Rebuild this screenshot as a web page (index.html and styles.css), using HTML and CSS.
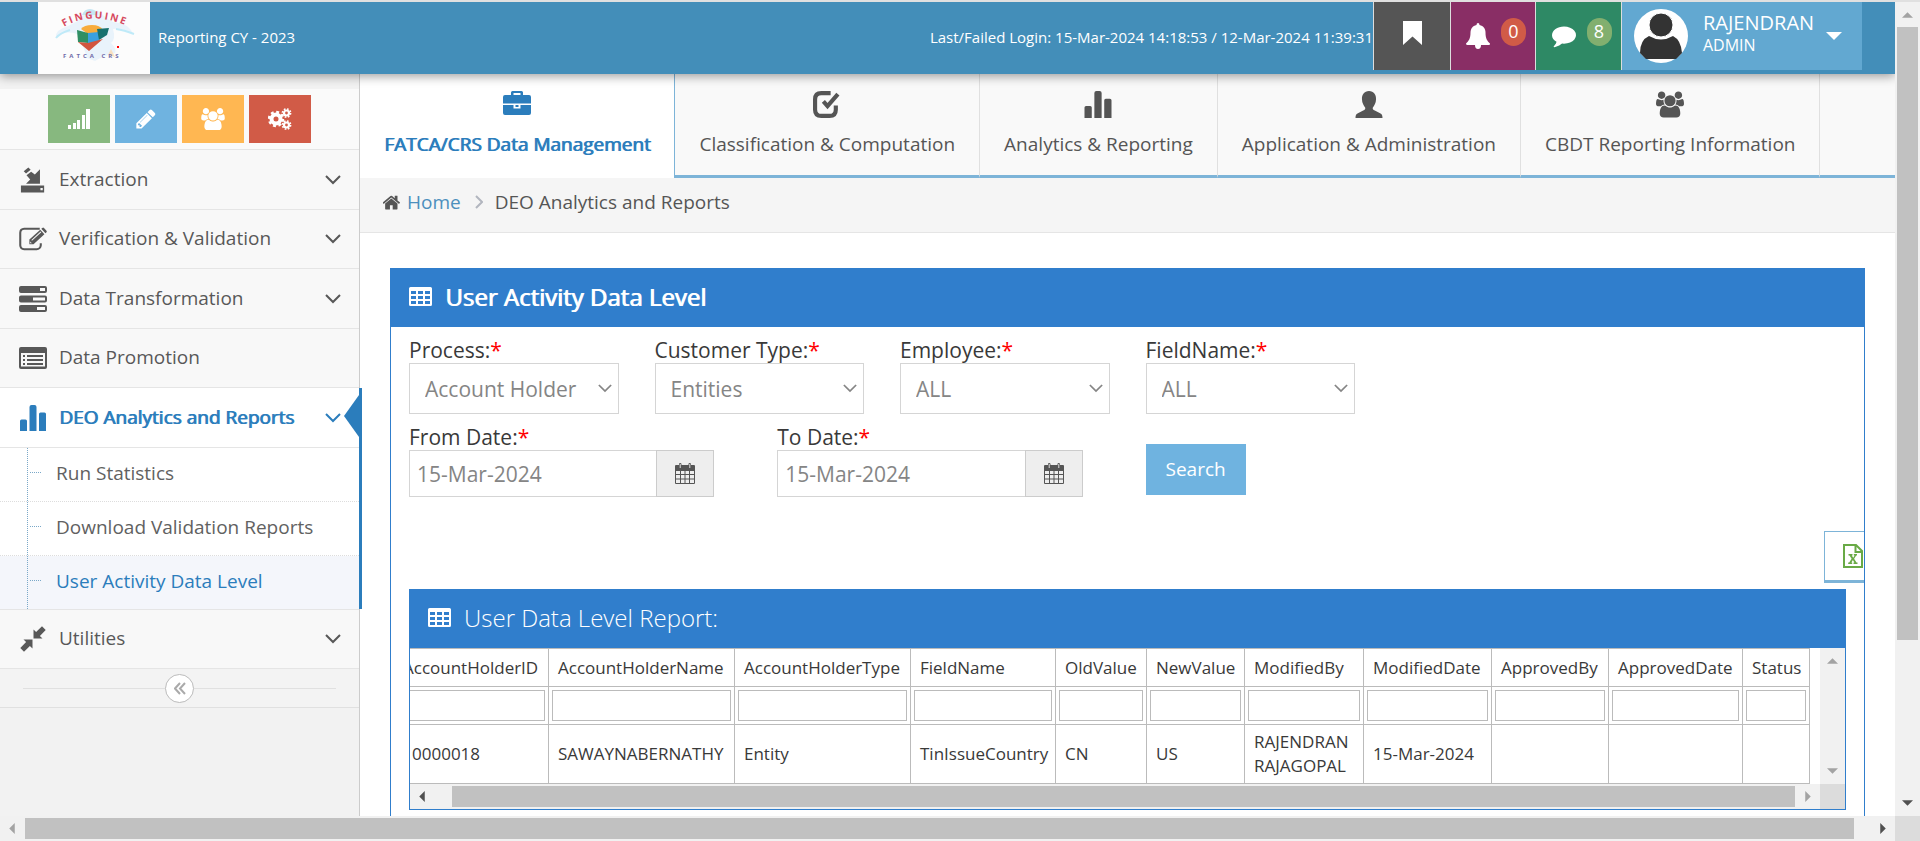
FILE: index.html
```html
<!DOCTYPE html>
<html lang="en">
<head>
  <meta charset="UTF-8">
  <meta name="viewport" content="width=device-width, initial-scale=1.0">
  <title>FATCA/CRS - User Activity Data Level</title>
  <link rel="stylesheet" href="styles.css">
</head>
<body>

  <!-- Icon set -->
  <svg class="icon-defs" aria-hidden="true">
    <symbol id="i-signal" viewBox="0 0 22 20"><path d="M0 16h3v4H0zM5 14h3v6H5zM9 11h3v9H9zM14 6h3v14h-3zM18 0h4v20h-4z"/></symbol>
    <symbol id="i-pencil" viewBox="100 100 1600 1600"><path d="M491 1536l91-91-235-235-91 91v107h128v128h107zm523-928q0-22-22-22-10 0-17 7l-542 542q-7 7-7 17 0 22 22 22 10 0 17-7l542-542q7-7 7-17zm-54-192l416 416-832 832h-416v-416zm683 96q0 53-37 90l-166 166-416-416 166-165q36-38 90-38 53 0 91 38l235 234q37 39 37 91z"/></symbol>
    <symbol id="i-users" viewBox="0 0 1920 1792"><path d="M593 896q-162 5-265 128h-134q-82 0-138-40.500t-56-118.500q0-353 124-353 6 0 43.500 21t97.500 42.500 119 21.500q67 0 133-23-5 37-5 66 0 139 81 256zm1071 637q0 120-73 189.500t-194 69.500h-874q-121 0-194-69.500t-73-189.500q0-53 3.500-103.500t14-109 26.500-108.500 43-97.500 62-81 85.500-53.500 111.500-20q10 0 43 21.500t73 48 107 48 135 21.500 135-21.500 107-48 73-48 43-21.500q61 0 111.500 20t85.500 53.500 62 81 43 97.500 26.500 108.500 14 109 3.500 103.500zm-1024-1277q0 106-75 181t-181 75-181-75-75-181 75-181 181-75 181 75 75 181zm704 384q0 159-112.500 271.500t-271.500 112.500-271.500-112.500-112.500-271.500 112.500-271.500 271.500-112.500 271.500 112.500 112.500 271.500zm576 225q0 78-56 118.500t-138 40.500h-134q-103-123-265-128 81-117 81-256 0-29-5-66 66 23 133 23 59 0 119-21.500t97.500-42.500 43.500-21q124 0 124 353zm-128-609q0 106-75 181t-181 75-181-75-75-181 75-181 181-75 181 75 75 181z"/></symbol>
    <symbol id="i-cogs" viewBox="0 0 24 22">
      <g fill="none" stroke="currentColor">
        <circle cx="8" cy="11" r="4.500" stroke-width="4"/>
        <circle cx="8" cy="11" r="7" stroke-width="2.400" stroke-dasharray="2.900 2.600"/>
        <circle cx="18.500" cy="5" r="2.500" stroke-width="2.200"/>
        <circle cx="18.500" cy="5" r="4.100" stroke-width="1.600" stroke-dasharray="1.700 1.520"/>
        <circle cx="18.500" cy="17" r="2.500" stroke-width="2.200"/>
        <circle cx="18.500" cy="17" r="4.100" stroke-width="1.600" stroke-dasharray="1.700 1.520"/>
      </g>
    </symbol>
    <symbol id="i-extract" viewBox="0 0 26 28"><path d="M3 4.500L8 0.500 10.500 3l-5 4zM20.500 2.500V18H5.500l4.500-4.500-4-4.500L11 5l4 3z"/><path fill-rule="evenodd" d="M0 20h25v7.500H0zm21 2.500v2.500h2.500v-2.500z"/></symbol>
    <symbol id="i-edit" viewBox="0 0 27 22"><path d="M20 1.200H5A4 4 0 0 0 1.200 5v12A4 4 0 0 0 5 20.800h12A4 4 0 0 0 21 17v-2" fill="none" stroke="currentColor" stroke-width="2"/><path fill-rule="evenodd" d="M10 11.500L20.500 2l4 4.500L14 16h-4zm2.500 1.200l9-8.200-.7-.7-8.800 8.100zM10.800 13.500v1.700h1.600zM21.500 1.200l1-.9q.8-.6 1.600.1l2.400 2.700q.6.800 0 1.500l-1 .9z"/></symbol>
    <symbol id="i-tasks" viewBox="0 0 28 26"><path fill-rule="evenodd" d="M2 0h24q2 0 2 2v3q0 2-2 2H2Q0 7 0 5V2q0-2 2-2zm19 2v3h5V2zM2 9.500h24q2 0 2 2v3q0 2-2 2H2q-2 0-2-2v-3q0-2 2-2zm12 2v3h12v-3zM2 19h24q2 0 2 2v3q0 2-2 2H2q-2 0-2-2v-3q0-2 2-2zm16 2v3h8v-3z"/></symbol>
    <symbol id="i-listalt" viewBox="0 0 28 22"><path fill-rule="evenodd" d="M2 0h24q2 0 2 2v18q0 2-2 2H2q-2 0-2-2V2q0-2 2-2zm0 6v13.500h24V6z"/><path d="M4 8h2v2H4zm4 0h16v2H8zM4 12h2v2H4zm4 0h16v2H8zM4 16h2v2H4zm4 0h16v2H8z"/></symbol>
    <symbol id="i-bars" viewBox="0 0 26 26"><path d="M0 26V16q0-1.500 1.500-1.500h4q1.500 0 1.500 1.500v10zM9.500 26V2q0-2 2-2h3q2 0 2 2v24zM19 26V9q0-1.500 1.500-1.500h4Q26 7.500 26 9v17z"/></symbol>
    <symbol id="i-compress" viewBox="0 0 26 26"><path d="M13.500 3.500l2.600 2.600L22 0.300 25.700 4l-5.800 5.900 2.600 2.600h-9zM3.500 13.500h9v9l-2.600-2.600L4 25.700.3 22l5.800-5.900z"/></symbol>
    <symbol id="i-down" viewBox="0 0 16 10"><path d="M1 1l7 7 7-7" fill="none" stroke="currentColor" stroke-width="2"/></symbol>
    <symbol id="i-briefcase" viewBox="0 0 28 27"><path fill-rule="evenodd" d="M8 4V1.500Q8 0 9.500 0h9Q20 0 20 1.500V4h6q2 0 2 2v6.500H0V6q0-2 2-2zm2.500 0h7V2h-7zM0 14h10.500v3.500h7V14H28v8q0 2-2 2H2q-2 0-2-2zm12.500 0h3v2h-3z"/></symbol>
    <symbol id="i-check" viewBox="0 0 27 26"><path d="M17 2H8Q2 2 2 8v10q0 6 6 6h8q6 0 6-6v-4" fill="none" stroke="currentColor" stroke-width="4"/><path d="M10 10l4 4.500L24 3" fill="none" stroke="currentColor" stroke-width="4"/></symbol>
    <symbol id="i-user" viewBox="0 0 28 28"><path d="M14 0c5 0 7.500 4 7.300 8.500-.1 4-1.800 6.500-3.300 8.500-.5 1.500.2 2.500 2 3.200l5.500 2.800c2 1 2.500 2.500 2.500 5H0c0-2.500.5-4 2.500-5L8 20.200c1.800-.7 2.500-1.700 2-3.200-1.500-2-3.200-4.500-3.300-8.500C6.500 4 9 0 14 0z"/></symbol>
    <symbol id="i-home" viewBox="60 190 1672 1400"><path d="M1408 992v480q0 26-19 45t-45 19h-384v-384h-256v384h-384q-26 0-45-19t-19-45v-480q0-1 .5-3t.5-3l575-474 575 474q1 2 1 6zm223-69l-62 74q-8 9-21 11h-3q-13 0-21-7l-692-577-692 577q-12 8-24 7-13-2-21-11l-62-74q-8-10-7-23.500t11-21.500l719-599q32-26 76-26t76 26l244 204v-195q0-14 9-23t23-9h192q14 0 23 9t9 23v408l219 182q10 8 11 21.500t-7 23.500z"/></symbol>
    <symbol id="i-right" viewBox="0 0 8 14"><path d="M1 1l6 6-6 6" fill="none" stroke="currentColor" stroke-width="2"/></symbol>
    <symbol id="i-table" viewBox="0 0 23 19"><path fill-rule="evenodd" d="M1.500 0h20Q23 0 23 1.500v16q0 1.500-1.500 1.500h-20Q0 19 0 17.500v-16Q0 0 1.500 0zM2 4v3h5V4zm7 0v3h5V4zm7 0v3h5V4zM2 9v3h5V9zm7 0v3h5V9zm7 0v3h5V9zM2 14v3h5v-3zm7 0v3h5v-3zm7 0v3h5v-3z"/></symbol>
    <symbol id="i-calendar" viewBox="0 0 20 21"><path fill-rule="evenodd" d="M1 2h3V1q0-1 1.200-1T6.500 1v1h7V1q0-1 1.200-1T16 1v1h3q1 0 1 1v17q0 1-1 1H1q-1 0-1-1V3q0-1 1-1zm0 6v3h4V8zm5 0v3h3.500V8zm4.500 0v3H14V8zM15 8v3h4V8zM1 12v3.500h4V12zm5 0v3.500h3.500V12zm4.500 0v3.500H14V12zm4.500 0v3.500h4V12zM1 16.500V20h4v-3.500zm5 0V20h3.500v-3.500zm4.500 0V20H14v-3.500zm4.500 0V20h4v-3.500z"/><path d="M4.700 1h1v4h-1zM14.300 1h1v4h-1z" fill="#ddd"/></symbol>
    <symbol id="i-bookmark" viewBox="0 0 19 24"><path d="M0 0h19v24l-9.500-8.500L0 24z"/></symbol>
    <symbol id="i-bell" viewBox="0 0 24 26"><path d="M12 0q1.500 0 1.500 2c4 .8 6 4 6 7.500 0 5.500 1.500 8.500 4.500 11 0 1-.5 1.500-1.500 1.500H15q0 4-3 4t-3-4H1.500Q0 22 0 20.500c3-2.500 4.500-5.500 4.500-11 0-3.500 2-6.700 6-7.500Q10.500 0 12 0z"/></symbol>
    <symbol id="i-comment" viewBox="0 128 1792 1664"><path d="M1792 896q0 174-120 321.500t-326 233-450 85.500q-70 0-145-8-198 175-460 242-49 14-114 22-17 2-30.500-9t-17.500-29v-1q-3-4-.5-12t2-10 4.500-9.500l6-9 7-8.500 8-9q7-8 31-34.500t34.500-38 31-39.500 32.500-51 27-59 26-76q-157-89-247.500-220t-90.500-281q0-130 71-248.500t191-204.500 286-136.500 348-50.500q244 0 450 85.500t326 233 120 321.500z"/></symbol>
    <symbol id="i-excel" viewBox="0 0 20 24"><path d="M1 1h12l6 6v16H1zM12.500 1v7H19" fill="none" stroke="currentColor" stroke-width="2"/><path d="M5.500 10h4v1.500h-.7l1.400 2.300 1.400-2.300h-.8V10H14v1.500h-.8l-2.100 3.300 2.400 3.700h1V20h-4v-1.500h.8L9.900 16l-1.500 2.500h.8V20h-4v-1.500h1l2.400-3.700-2.100-3.300h-1z"/></symbol>
    <symbol id="i-dleft" viewBox="0 0 12 13"><path d="M6 1L1 6.500 6 12M11 1L6 6.500l5 5.500" fill="none" stroke="currentColor" stroke-width="2"/></symbol>
    <symbol id="i-tri-up" viewBox="0 0 12 6"><path d="M6 0l6 6H0z"/></symbol>
    <symbol id="i-tri-down" viewBox="0 0 12 6"><path d="M0 0h12L6 6z"/></symbol>
    <symbol id="i-tri-left" viewBox="0 0 6 12"><path d="M6 0v12L0 6z"/></symbol>
    <symbol id="i-tri-right" viewBox="0 0 6 12"><path d="M0 0l6 6-6 6z"/></symbol>
  </svg>

  <div class="viewport">
    <div class="page">

      <!-- Top bar -->
      <header class="navbar">
        <a class="brand" href="#" aria-label="Finguine FATCA CRS">
          <svg class="brand-logo" viewBox="0 0 112 72">
            <path d="M18 35q-1-7 12-11 12-5 16-12 5-6 15-3 6 7 14 11 16 1 20 12-10-6-20-5 3 10-2 14 6 6 4 10-12 3-20 8l-8-3q-4-14-10-24-12-4-21 3z" fill="#e9f3fb"/>
            <path d="M18 36q4-5 14-8M96 32q-10-4-18-5" fill="none" stroke="#bfeaf8" stroke-width="2"/>
            <path d="M44 13q2-6 8-6t7 6z" fill="#c5e6f3"/>
            <path d="M43 27q3-4 11-4t11 5l-11 7z" fill="#f7ac3c"/>
            <path d="M39 28l11 3v10l-10-1z" fill="#2f8f63"/>
            <path d="M50 31l11-1v9l-11 3z" fill="#3ba0e0"/>
            <path d="M59 27l12-1-2 7-8 5z" fill="#17716f"/>
            <path d="M40 40l10 1 11-3 4-1-14 12z" fill="#d1553f"/>
            <path d="M70 53l3-6 4 8z" fill="#f9dfc0"/>
            <rect x="79" y="44" width="2" height="2" fill="#f00"/>
            <path id="arc" d="M26 25Q54 8 92 25" fill="none"/>
            <text class="logo-name"><textPath href="#arc">FINGUINE</textPath></text>
            <text class="logo-sub" x="25" y="56">FATCA CRS</text>
          </svg>
        </a>
        <span class="navbar-text">Reporting CY - 2023</span>
        <span class="navbar-text login-info">Last/Failed Login: 15-Mar-2024 14:18:53 / 12-Mar-2024 11:39:31</span>
        <button class="nav-btn nav-grey" aria-label="Bookmark"><svg class="ico-bookmark"><use href="#i-bookmark"/></svg></button>
        <button class="nav-btn nav-purple" aria-label="Notifications"><svg class="ico-bell"><use href="#i-bell"/></svg><span class="badge badge-red">0</span></button>
        <button class="nav-btn nav-green" aria-label="Messages"><svg class="ico-bell"><use href="#i-comment"/></svg><span class="badge badge-green">8</span></button>
        <button class="nav-btn nav-user">
          <svg class="avatar" viewBox="0 0 54 54">
            <circle cx="27" cy="27" r="27" fill="#fff"/>
            <path d="M6 44q0-13 9-17 12 7 24 0 8 4 9 17l-6 6H12z" fill="#333"/>
            <ellipse cx="27" cy="16" rx="12" ry="12" fill="#333" stroke="#fff"/>
          </svg>
          <span class="user-info">RAJENDRAN<small>ADMIN</small></span>
          <svg class="caret"><use href="#i-tri-down"/></svg>
        </button>
      </header>

      <div class="main-container">

        <!-- Sidebar -->
        <aside class="sidebar">
          <div class="shortcuts">
            <button class="btn-success" aria-label="Statistics"><svg><use href="#i-signal"/></svg></button>
            <button class="btn-info" aria-label="Edit"><svg><use href="#i-pencil"/></svg></button>
            <button class="btn-warning" aria-label="Users"><svg class="wide"><use href="#i-users"/></svg></button>
            <button class="btn-danger" aria-label="Settings"><svg class="wide"><use href="#i-cogs"/></svg></button>
          </div>
          <ul class="nav-list">
            <li><a href="#"><svg><use href="#i-extract"/></svg><span>Extraction</span><svg class="arrow"><use href="#i-down"/></svg></a></li>
            <li><a href="#"><svg><use href="#i-edit"/></svg><span>Verification &amp; Validation</span><svg class="arrow"><use href="#i-down"/></svg></a></li>
            <li><a href="#"><svg><use href="#i-tasks"/></svg><span>Data Transformation</span><svg class="arrow"><use href="#i-down"/></svg></a></li>
            <li><a href="#"><svg><use href="#i-listalt"/></svg><span>Data Promotion</span></a></li>
            <li class="active">
              <a href="#"><svg><use href="#i-bars"/></svg><span>DEO Analytics and Reports</span><svg class="arrow"><use href="#i-down"/></svg></a>
              <ul class="submenu">
                <li><a href="#">Run Statistics</a></li>
                <li><a href="#">Download Validation Reports</a></li>
                <li class="current"><a href="#">User Activity Data Level</a></li>
              </ul>
            </li>
            <li><a href="#"><svg><use href="#i-compress"/></svg><span>Utilities</span><svg class="arrow"><use href="#i-down"/></svg></a></li>
          </ul>
          <div class="sidebar-collapse">
            <button aria-label="Collapse sidebar"><svg><use href="#i-dleft"/></svg></button>
          </div>
        </aside>

        <main class="main-content">
          <nav class="tabs">
            <a class="tab active" href="#"><svg><use href="#i-briefcase"/></svg>FATCA/CRS Data Management</a>
            <a class="tab" href="#"><svg><use href="#i-check"/></svg>Classification &amp; Computation</a>
            <a class="tab" href="#"><svg><use href="#i-bars"/></svg>Analytics &amp; Reporting</a>
            <a class="tab" href="#"><svg><use href="#i-user"/></svg>Application &amp; Administration</a>
            <a class="tab" href="#"><svg><use href="#i-users"/></svg>CBDT Reporting Information</a>
            <span class="tab-rest"></span>
          </nav>

          <div class="breadcrumbs">
            <svg class="ico-home"><use href="#i-home"/></svg>
            <a href="#">Home</a>
            <svg class="ico-sep"><use href="#i-right"/></svg>
            <span>DEO Analytics and Reports</span>
          </div>

          <section class="widget">
            <h4 class="widget-header bold"><svg><use href="#i-table"/></svg>User Activity Data Level</h4>
            <form class="filters">
              <div class="field">
                <label for="process">Process:<i>*</i></label>
                <div class="select-wrap"><select id="process"><option>Account Holder</option></select><svg><use href="#i-down"/></svg></div>
              </div>
              <div class="field">
                <label for="customerType">Customer Type:<i>*</i></label>
                <div class="select-wrap"><select id="customerType"><option>Entities</option></select><svg><use href="#i-down"/></svg></div>
              </div>
              <div class="field">
                <label for="employee">Employee:<i>*</i></label>
                <div class="select-wrap"><select id="employee"><option>ALL</option></select><svg><use href="#i-down"/></svg></div>
              </div>
              <div class="field">
                <label for="fieldName">FieldName:<i>*</i></label>
                <div class="select-wrap"><select id="fieldName"><option>ALL</option></select><svg><use href="#i-down"/></svg></div>
              </div>
              <div class="field field-date first">
                <label for="fromDate">From Date:<i>*</i></label>
                <div class="input-group"><input type="text" id="fromDate" value="15-Mar-2024"><button type="button" aria-label="Pick from date"><svg><use href="#i-calendar"/></svg></button></div>
              </div>
              <div class="field field-date">
                <label for="toDate">To Date:<i>*</i></label>
                <div class="input-group"><input type="text" id="toDate" value="15-Mar-2024"><button type="button" aria-label="Pick to date"><svg><use href="#i-calendar"/></svg></button></div>
              </div>
              <div class="field field-search">
                <button type="button" class="btn-search">Search</button>
              </div>
            </form>

            <div class="export-bar"><button class="btn-export" aria-label="Export to Excel"><svg><use href="#i-excel"/></svg></button></div>

            <div class="report">
              <h4 class="widget-header"><svg><use href="#i-table"/></svg>User Data Level Report:</h4>
              <div class="report-body">
                <div class="report-view">
                  <table class="report-table">
                    <colgroup>
                      <col class="c-id"><col class="c-name"><col class="c-type"><col class="c-field"><col class="c-old"><col class="c-new"><col class="c-modby"><col class="c-moddate"><col class="c-appby"><col class="c-appdate"><col class="c-status">
                    </colgroup>
                    <thead>
                      <tr>
                        <th>AccountHolderID</th><th>AccountHolderName</th><th>AccountHolderType</th><th>FieldName</th><th>OldValue</th><th>NewValue</th><th>ModifiedBy</th><th>ModifiedDate</th><th>ApprovedBy</th><th>ApprovedDate</th><th>Status</th>
                      </tr>
                      <tr class="filter-row">
                        <td><input type="text" aria-label="Filter AccountHolderID"></td>
                        <td><input type="text" aria-label="Filter AccountHolderName"></td>
                        <td><input type="text" aria-label="Filter AccountHolderType"></td>
                        <td><input type="text" aria-label="Filter FieldName"></td>
                        <td><input type="text" aria-label="Filter OldValue"></td>
                        <td><input type="text" aria-label="Filter NewValue"></td>
                        <td><input type="text" aria-label="Filter ModifiedBy"></td>
                        <td><input type="text" aria-label="Filter ModifiedDate"></td>
                        <td><input type="text" aria-label="Filter ApprovedBy"></td>
                        <td><input type="text" aria-label="Filter ApprovedDate"></td>
                        <td><input type="text" aria-label="Filter Status"></td>
                      </tr>
                    </thead>
                    <tbody>
                      <tr>
                        <td class="id-cell">0000018</td><td>SAWAYNABERNATHY</td><td>Entity</td><td>TinIssueCountry</td><td>CN</td><td>US</td><td>RAJENDRAN RAJAGOPAL</td><td>15-Mar-2024</td><td></td><td></td><td></td>
                      </tr>
                    </tbody>
                  </table>
                </div>
                <div class="scroll-y">
                  <svg class="tri-v"><use href="#i-tri-up"/></svg>
                  <svg class="tri-v"><use href="#i-tri-down"/></svg>
                </div>
                <div class="scroll-x">
                  <svg class="tri-h dark"><use href="#i-tri-left"/></svg>
                  <div class="thumb thumb-inner"></div>
                  <svg class="tri-h"><use href="#i-tri-right"/></svg>
                </div>
                <div class="scroll-corner"></div>
              </div>
            </div>
          </section>
        </main>
      </div>
    </div>

    <!-- Page scrollbars -->
    <div class="scroll-y page-scroll-y">
      <svg class="tri-v"><use href="#i-tri-up"/></svg>
      <div class="thumb"></div>
      <svg class="tri-v dark"><use href="#i-tri-down"/></svg>
    </div>
    <div class="scroll-x">
      <svg class="tri-h"><use href="#i-tri-left"/></svg>
      <div class="thumb"></div>
      <svg class="tri-h dark"><use href="#i-tri-right"/></svg>
    </div>
    <div class="scroll-corner"></div>
  </div>

</body>
</html>
```
FILE: styles.css
```css
* {
  box-sizing: border-box;
}

body, html {
  margin: 0;
  padding: 0;
  height: 100%;
}

body {
  font-family: "Open Sans", "Noto Sans", sans-serif;
  font-size: 19px;
  color: #393939;
  background-color: #fff;
  overflow: hidden;
}

a {
  text-decoration: none;
  color: inherit;
}

ul {
  list-style: none;
  margin: 0;
  padding: 0;
}

button, input, select {
  font: inherit;
  margin: 0;
}

button {
  border: none;
  padding: 0;
  color: inherit;
  cursor: pointer;
}

svg {
  fill: currentColor;
  flex-shrink: 0;
}

.icon-defs {
  display: none;
}

.viewport {
  display: grid;
  grid-template-columns: minmax(0, 1fr) 25px;
  grid-template-rows: minmax(0, 1fr) 25px;
  height: 100vh;
  border-top: 2px solid #e0e0e0;
}

.page {
  display: flex;
  flex-direction: column;
  overflow: hidden;
}

/* Top bar */
.navbar {
  display: flex;
  align-items: flex-start;
  height: 72px;
  flex-shrink: 0;
  padding: 0 33px 0 38px;
  background-color: #438eb9;
  color: #fff;
  box-shadow: 0 2px 10px rgba(0, 0, 0, 0.4);
  position: relative;
  z-index: 2;
}

.brand {
  width: 112px;
  height: 72px;
  background-color: #fcfcfc;
}

.brand-logo {
  display: block;
  width: 112px;
  height: 72px;
}

.logo-name {
  font-size: 10px;
  font-weight: 700;
  letter-spacing: 2px;
  fill: #d64a60;
}

.logo-sub {
  font-size: 6px;
  font-weight: 700;
  letter-spacing: 3px;
  fill: #6f6aa8;
}

.navbar-text {
  font-size: 15px;
  line-height: 70px;
  margin-left: 8px;
}

.login-info {
  margin-left: auto;
}

.nav-btn {
  display: flex;
  align-items: center;
  justify-content: center;
  height: 68px;
  border-left: 1px solid #ddd;
  color: #fff;
}

.nav-grey {
  width: 77px;
  background-color: #555;
}

.nav-purple {
  width: 85px;
  padding-left: 6px;
  background-color: #892e65;
}

.nav-green {
  width: 86px;
  padding-left: 6px;
  background-color: #2e8965;
}

.nav-user {
  width: 241px;
  padding-left: 12px;
  justify-content: flex-start;
  background-color: #62a8d1;
}

.ico-bookmark {
  width: 19px;
  height: 24px;
  margin-bottom: 6px;
}

.ico-bell {
  width: 24px;
  height: 26px;
}

.badge {
  width: 25px;
  height: 28px;
  margin: 0 0 8px 11px;
  border-radius: 13px;
  font-size: 18px;
  line-height: 26px;
}

.badge-red {
  background-color: #d15b47;
}

.badge-green {
  background-color: #82af6f;
}

.avatar {
  width: 54px;
  height: 54px;
}

.user-info {
  display: flex;
  flex-direction: column;
  margin: 0 12px 4px 15px;
  font-size: 20px;
  line-height: 23px;
  text-align: left;
}

.user-info small {
  font-size: 16px;
}

.caret {
  width: 16px;
  height: 8px;
}

.main-container {
  display: flex;
  flex: 1;
  min-height: 0;
}

/* Sidebar */
.sidebar {
  width: 360px;
  flex-shrink: 0;
  padding-top: 15px;
  background-color: #f2f2f2;
  border-right: 1px solid #ccc;
}

.shortcuts {
  display: flex;
  justify-content: center;
  gap: 5px;
  padding: 6px 0;
  background-color: #fafafa;
}

.shortcuts button {
  display: flex;
  align-items: center;
  justify-content: center;
  width: 62px;
  height: 48px;
  color: #fff;
}

.shortcuts svg {
  width: 22px;
  height: 20px;
}

.shortcuts .wide {
  width: 24px;
  height: 22px;
}

.btn-success {
  background-color: #87b87f;
}

.btn-info {
  background-color: #6fb3e0;
}

.btn-warning {
  background-color: #ffb752;
}

.btn-danger {
  background-color: #d15b47;
}

.nav-list > li {
  border-top: 1px solid #e5e5e5;
}

.nav-list > li:last-child {
  border-bottom: 1px solid #e5e5e5;
}

.nav-list > li > a {
  display: flex;
  align-items: center;
  gap: 12px;
  height: 59px;
  padding: 0 18px 0 19px;
  background-color: #f8f8f8;
  color: #585858;
}

.nav-list > li:nth-child(even) > a {
  height: 58px;
}

.nav-list > li > a span {
  padding-bottom: 2px;
}

.nav-list > li > a svg {
  width: 28px;
  height: 26px;
}

.nav-list > li > a .arrow {
  width: 16px;
  height: 10px;
  margin-left: auto;
}

.nav-list > .active {
  position: relative;
}

.nav-list > .active > a {
  background-color: #fff;
  color: #2b7dbc;
  text-shadow: 1px 0 0 #2b7dbc;
}

.nav-list > .active::before {
  content: "";
  position: absolute;
  top: 0;
  bottom: 0;
  right: -3px;
  width: 3px;
  background-color: #2b7dbc;
}

.nav-list > .active::after {
  content: "";
  position: absolute;
  top: 7px;
  right: 0;
  border-style: solid;
  border-width: 21px 15px 21px 0;
  border-color: transparent #2b7dbc;
}

.submenu {
  position: relative;
  border-top: 1px solid #e5e5e5;
  background-color: #fff;
}

.submenu::before {
  content: "";
  position: absolute;
  top: 0;
  bottom: 0;
  left: 27px;
  border-left: 1px dotted #7aa8c8;
}

.submenu li + li {
  border-top: 1px dotted #ddd;
}

.submenu a {
  display: flex;
  align-items: center;
  height: 53px;
  padding: 0 0 4px 30px;
  color: #616161;
}

.submenu a::before {
  content: "";
  width: 11px;
  margin-right: 15px;
  border-top: 1px dotted #7aa8c8;
}

.submenu .current a {
  background-color: #f4f6fb;
  color: #2b7dbc;
}

.sidebar-collapse {
  display: flex;
  align-items: center;
  height: 39px;
  padding: 0 23px;
  border-bottom: 1px solid #e0e0e0;
  background-color: #f3f3f3;
}

.sidebar-collapse::before,
.sidebar-collapse::after {
  content: "";
  flex: 1;
  border-top: 1px solid #e0e0e0;
}

.sidebar-collapse button {
  display: flex;
  align-items: center;
  justify-content: center;
  width: 29px;
  height: 29px;
  border: 1px solid #bbb;
  border-radius: 50%;
  background-color: #fff;
  color: #aaa;
}

.sidebar-collapse svg {
  width: 12px;
  height: 13px;
}

/* Tabs */
.main-content {
  flex: 1;
  min-width: 0;
}

.tabs {
  display: flex;
  height: 104px;
}

.tab {
  display: flex;
  flex-direction: column;
  align-items: center;
  gap: 12px;
  padding: 17px 24px 0;
  border-right: 1px solid #e0e0e0;
  border-bottom: 3px solid #7db4d8;
  background-color: #f9f9f9;
  color: #555;
  line-height: 28px;
  white-space: nowrap;
}

.tab svg {
  width: 28px;
  height: 27px;
}

.tab.active {
  background-color: #fff;
  border-right-color: #7db4d8;
  border-bottom: none;
  color: #2b7dbc;
  text-shadow: 1px 0 0 #2b7dbc;
}

.tab-rest {
  flex: 1;
  border-bottom: 3px solid #7db4d8;
  background-color: #f9f9f9;
}

.breadcrumbs {
  display: flex;
  align-items: center;
  height: 55px;
  padding: 0 23px 6px;
  border-bottom: 1px solid #e5e5e5;
  background-color: #f5f5f5;
  color: #555;
}

.breadcrumbs a {
  margin-left: 6px;
  color: #4c8fbd;
}

.ico-home {
  width: 18px;
  height: 15px;
}

.ico-sep {
  width: 8px;
  height: 14px;
  margin: 0 12px 0 14px;
  color: #b2b6bf;
}

/* Widget */
.widget {
  margin: 35px 30px 0;
  border: 1px solid #307ecc;
  padding-bottom: 60px;
}

.widget-header {
  display: flex;
  align-items: center;
  gap: 13px;
  height: 59px;
  margin: 0;
  padding: 0 18px 3px;
  background-color: #307ecc;
  color: #fff;
  font-size: 24px;
  font-weight: 300;
}

.widget-header.bold {
  margin-top: -1px;
  font-weight: 400;
  text-shadow: 1px 0 0 #fff;
}

.widget-header svg {
  width: 23px;
  height: 19px;
}

.filters {
  display: grid;
  grid-template-columns: repeat(12, 1fr);
}

.field {
  grid-column: span 2;
  padding: 10px 18px 0;
}

.field-date {
  grid-column: span 3;
}

.field-date.first {
  grid-column: 1 / span 3;
}

.field label {
  display: block;
  font-size: 21px;
  line-height: 26px;
}

.field i {
  color: #f00;
  font-style: normal;
}

.select-wrap {
  position: relative;
}

.select-wrap select {
  display: block;
  width: 100%;
  height: 51px;
  padding: 0 15px;
  border: 1px solid #d5d5d5;
  border-radius: 0;
  appearance: none;
  background-color: #fff;
  color: #858585;
  font-size: 21px;
}

.select-wrap svg {
  position: absolute;
  right: 7px;
  top: 21px;
  width: 14px;
  height: 9px;
  color: #858585;
  pointer-events: none;
}

.input-group {
  display: flex;
  height: 47px;
  margin-right: 27px;
}

.input-group input {
  flex: 1;
  min-width: 0;
  padding: 0 7px;
  border: 1px solid #d5d5d5;
  border-right: none;
  color: #858585;
  font-size: 21px;
}

.input-group button {
  display: flex;
  align-items: center;
  justify-content: center;
  width: 58px;
  border: 1px solid #ccc;
  background-color: #eee;
  color: #555;
}

.input-group svg {
  width: 20px;
  height: 21px;
}

.field-search {
  padding-top: 30px;
}

.btn-search {
  height: 51px;
  padding: 0 20px 2px;
  background-color: #6fb3e0;
  color: #fff;
}

.export-bar {
  display: flex;
  justify-content: flex-end;
  margin: 34px 0 6px;
}

.btn-export {
  width: 40px;
  height: 52px;
  padding-left: 18px;
  overflow: hidden;
  border: 1px solid #7db4d8;
  border-width: 1px 0 3px 1px;
  background-color: #fff;
  color: #69aa46;
}

.btn-export svg {
  display: block;
  width: 20px;
  height: 24px;
}

/* Report */
.report {
  margin: 0 18px;
  border: 1px solid #307ecc;
}

.report .widget-header {
  margin-top: -1px;
}

.report-body {
  display: grid;
  grid-template-columns: minmax(0, 1fr) 25px;
}

/* table is scrolled to its right end */
.report-view {
  display: flex;
  justify-content: flex-end;
  padding-right: 10px;
  overflow: hidden;
}

.report-table {
  flex-shrink: 0;
  width: 1416px;
  table-layout: fixed;
  border-collapse: collapse;
  font-size: 17px;
  line-height: 24px;
}

.c-id { width: 155px; }
.c-name { width: 186px; }
.c-type { width: 176px; }
.c-field { width: 145px; }
.c-old { width: 91px; }
.c-new { width: 98px; }
.c-modby { width: 119px; }
.c-moddate { width: 128px; }
.c-appby { width: 117px; }
.c-appdate { width: 134px; }
.c-status { width: 67px; }

.report-table th,
.report-table td {
  height: 38px;
  padding: 0 9px;
  border: 1px solid #bbb;
  font-weight: 400;
  text-align: left;
}

.report-table tbody td {
  height: 59px;
}

.report-table .filter-row td {
  padding: 3px;
}

.report-table .id-cell {
  padding-left: 18px;
}

.filter-row input {
  display: block;
  width: 100%;
  height: 31px;
  border: 1px solid #bbb;
}

/* Scrollbars */
.scroll-y,
.scroll-x {
  display: flex;
  align-items: center;
  justify-content: space-between;
  background-color: #f1f1f1;
  color: #a3a3a3;
}

.scroll-y {
  flex-direction: column;
  padding: 10px 0;
}

.scroll-x {
  height: 25px;
  padding: 0 9px;
}

.thumb {
  background-color: #c1c1c1;
}

.scroll-x .thumb {
  flex: 1;
  height: 21px;
  margin: 0 26px 0 10px;
}

.scroll-x .thumb-inner {
  margin: 0 10px 0 27px;
}

.page-scroll-y .thumb {
  flex: 1;
  width: 21px;
  margin: 9px 0 160px;
}

.tri-v {
  width: 11px;
  height: 6px;
}

.tri-h {
  width: 6px;
  height: 11px;
}

.dark {
  color: #505050;
}

.scroll-corner {
  background-color: #dcdcdc;
}
```
